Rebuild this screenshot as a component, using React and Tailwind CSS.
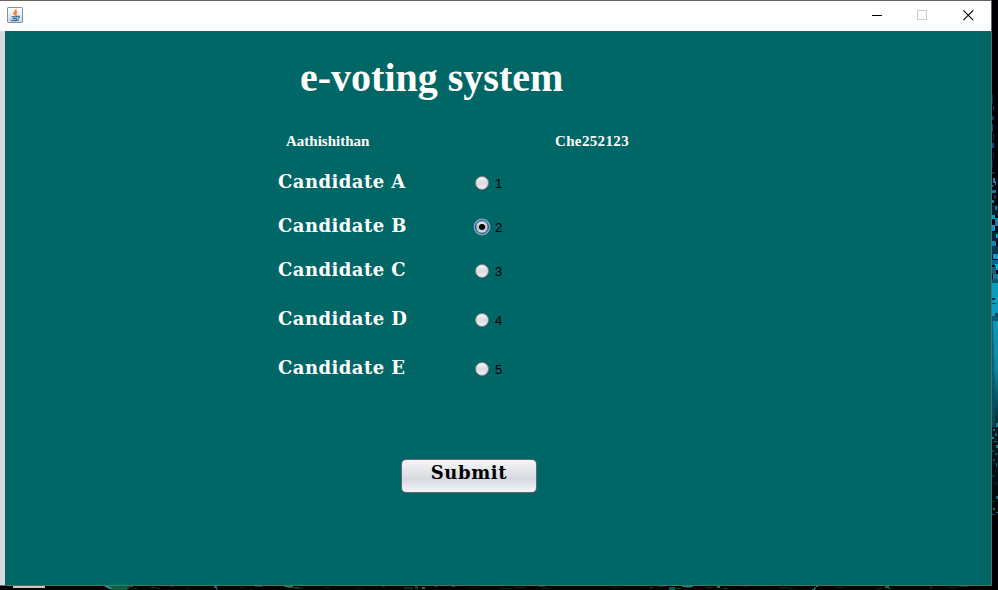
const candidates = [
  { name: 'Candidate A', value: '1', height: 'h-11' },
  { name: 'Candidate B', value: '2', height: 'h-11', selected: true },
  { name: 'Candidate C', value: '3', height: 'h-[49px]' },
  { name: 'Candidate D', value: '4', height: 'h-[49px]' },
  { name: 'Candidate E', value: '5', height: 'h-[49px]' },
];

// [x, y, width, height, colour] marks of the wallpaper right of the window
const sideMarks = [
  [0, 94, 1, 10, '#0a2a55'], [1, 106, 1, 5, '#0b3c70'], [0, 116, 2, 4, '#0b3c70'], [0, 124, 1, 8, '#0c4c86'],
  [1, 134, 1, 6, '#0a2a55'], [0, 143, 2, 5, '#0c4c86'], [1, 152, 1, 6, '#0a2a55'], [0, 160, 1, 8, '#082040'],
  [0, 172, 3, 2, '#063045'], [1, 178, 2, 5, '#0a86b8'], [0, 185, 2, 2, '#0a5c90'], [3, 181, 1, 4, '#0a86b8'],
  [0, 190, 4, 3, '#0a78a4'], [2, 195, 2, 4, '#063c5a'], [0, 200, 2, 3, '#0a86b8'], [0, 205, 6, 10, '#062030'],
  [3, 206, 2, 4, '#0a78a4'], [0, 215, 3, 4, '#0c9cc8'], [3, 218, 3, 8, '#0a86b0'], [0, 225, 3, 6, '#0c9cc8'],
  [0, 232, 6, 9, '#052535'], [4, 234, 2, 4, '#0c9cc8'], [0, 241, 4, 5, '#0a86b0'], [0, 246, 6, 9, '#063850'],
  [1, 254, 5, 5, '#0c9cc8'], [0, 260, 6, 5, '#0a6484'], [3, 264, 3, 6, '#0caad0'], [0, 267, 4, 7, '#08607c'],
  [1, 274, 5, 5, '#0a80a0'], [0, 279, 6, 5, '#075a74'], [0, 283, 6, 17, '#0c9cc0'], [0, 298, 3, 2, '#053040'],
  [0, 300, 6, 16, '#0c9cc0'], [0, 303, 4, 1, '#084858'], [3, 313, 3, 4, '#084858'], [0, 316, 6, 5, '#0a5c70'],
];

const lowerMarks = [
  [4, 423, 2, 4, '#0a8c98'], [1, 429, 2, 2, '#087880'], [3, 433, 2, 3, '#066068'], [0, 437, 2, 2, '#0a8c90'],
  [2, 441, 3, 1, '#087078'], [4, 445, 2, 3, '#087880'], [0, 450, 2, 2, '#054850'], [3, 453, 2, 2, '#066068'],
  [1, 459, 2, 2, '#054850'], [4, 463, 1, 4, '#066068'], [0, 475, 2, 2, '#043840'], [3, 483, 2, 1, '#043840'],
  [4, 496, 2, 3, '#077078'], [0, 501, 3, 1, '#043840'], [1, 508, 2, 2, '#088078'], [4, 512, 2, 1, '#077078'],
  [0, 514, 3, 1, '#055058'],
];

const bottomMarks = [
  [130, 0, 3, 1, '#106050'], [134, 2, 3, 1, '#0a4038'], [150, 1, 6, 1, '#0a3a38'], [156, 2, 4, 1, '#082c28'],
  [170, 0, 5, 1, '#082c28'], [185, 2, 6, 1, '#051c18'], [214, 0, 3, 2, '#107870'], [216, 2, 2, 2, '#0a5048'],
  [240, 1, 5, 1, '#062820'], [255, 0, 8, 1, '#0a4838'], [284, 0, 9, 1, '#108060'], [287, 1, 12, 1, '#0a5040'],
  [295, 2, 8, 1, '#083828'], [325, 1, 5, 1, '#062820'], [355, 2, 7, 1, '#051c18'], [382, 0, 3, 1, '#083828'],
  [404, 1, 9, 2, '#073020'], [415, 0, 3, 3, '#0a4a34'], [422, 1, 3, 2, '#107860'], [434, 0, 4, 1, '#083828'],
  [452, 0, 3, 1, '#0d6048'], [470, 1, 9, 1, '#051c18'], [500, 2, 12, 1, '#062620'], [515, 1, 10, 1, '#082c28'],
  [539, 0, 6, 1, '#083c38'], [541, 2, 8, 1, '#062620'], [610, 1, 10, 1, '#051c18'], [650, 1, 3, 1, '#0a5048'],
  [658, 0, 7, 1, '#073028'], [669, 1, 6, 3, '#0c5850'], [676, 2, 5, 1, '#084438'], [682, 0, 11, 1, '#128078'],
  [686, 1, 5, 1, '#0a5048'], [706, 1, 7, 1, '#083828'], [717, 0, 3, 2, '#107860'], [724, 2, 3, 1, '#0a5048'],
  [742, 0, 8, 1, '#051c18'], [779, 1, 9, 1, '#073028'], [787, 2, 6, 1, '#062620'], [812, 3, 3, 1, '#128078'],
  [814, 1, 2, 2, '#0c6860'], [816, 0, 2, 1, '#128078'], [835, 1, 9, 1, '#062620'], [876, 2, 6, 1, '#073028'],
  [885, 0, 4, 2, '#107060'], [888, 2, 3, 1, '#0a5048'], [930, 0, 2, 3, '#073028'], [948, 1, 9, 1, '#062620'],
  [959, 0, 9, 1, '#083828'],
];

function Marks({ marks }) {
  return marks.map(([x, y, width, height, fill]) => (
    <rect key={`${x}-${y}`} x={x} y={y} width={width} height={height} fill={fill} />
  ));
}

function SideWallpaper() {
  return (
    <svg width="6" height="586" className="block shrink-0">
      <defs>
        <linearGradient id="glow" x1="0" y1="0" x2="0" y2="1">
          <stop offset="0" stopColor="#0c98bc" />
          <stop offset=".45" stopColor="#0a88a8" />
          <stop offset="1" stopColor="#04252b" />
        </linearGradient>
        <linearGradient id="shade" x1="0" y1="0" x2="0" y2="1">
          <stop offset="0" stopColor="#031a1e" />
          <stop offset="1" stopColor="#000405" />
        </linearGradient>
      </defs>
      <rect width="6" height="586" fill="#000002" />
      <rect y="321" width="6" height="106" fill="url(#glow)" />
      <path d="M0 321h1l2 72v34H0z" fill="#07515f" opacity=".7" />
      <rect y="427" width="6" height="88" fill="url(#shade)" />
      <Marks marks={sideMarks} />
      <Marks marks={lowerMarks} />
    </svg>
  );
}

function BottomWallpaper() {
  return (
    <svg width="998" height="4" className="block">
      <rect width="998" height="4" fill="#000202" />
      <rect x="13" width="32" height="2" fill="#c8c8c8" />
      <path d="M104 0h24l2 1-3 3h-16z" fill="#0c6040" />
      <path d="M104 0h5l3 3h-2z" fill="#109890" />
      <Marks marks={bottomMarks} />
    </svg>
  );
}

function JavaIcon() {
  return (
    <svg width="16" height="16" viewBox="0 0 16 16" fill="none">
      <defs>
        <linearGradient id="tile" x1="0" y1="0" x2="0" y2="1">
          <stop offset="0" stopColor="#fff" />
          <stop offset="1" stopColor="#c9d7e3" />
        </linearGradient>
      </defs>
      <rect x=".5" y=".5" width="15" height="15" rx=".7" fill="url(#tile)" stroke="#7893aa" />
      <path d="M8.8 2.2c.8 2-2.6 2.8-1.7 4.6.3.6.8 1 .9 1.7M10.5 4.6c-2 .8-2.3 1.7-1.5 2.6.4.5.2 1-.2 1.4" stroke="#ed7d24" strokeWidth="1.4" />
      <path d="M4.6 9.4c1.6.5 4.4.4 6.2 0M5.4 11.1c1.3.4 3.5.4 4.8 0M10.9 9.2c2.2-.5 2 1.4.1 2M4.2 12.6c-1.7 1.2 5.8 1.4 7.5.2" stroke="#35689a" strokeWidth="1.1" />
    </svg>
  );
}

function TitleBar() {
  return (
    <header className="flex h-[30px] items-start bg-white pl-[7px] pt-[6px]">
      <JavaIcon />
      <div className="ml-auto flex pr-[17px] pt-[3px]">
        <svg width="11" height="11" shapeRendering="crispEdges" className="mr-[34px]"><path d="M0 5.5h10" stroke="#000" /></svg>
        <svg width="11" height="11" shapeRendering="crispEdges" fill="none" className="mr-[35px]"><rect x=".5" y=".5" width="9" height="9" stroke="#ccc" /></svg>
        <svg width="11" height="11"><path d="M.3 .3l9.9 9.9M10.2 .3L.3 10.2" stroke="#000" strokeWidth="1.1" /></svg>
      </div>
    </header>
  );
}

function Radio({ selected }) {
  return (
    <svg width="18" height="18" viewBox="0 0 18 18">
      <defs>
        <linearGradient id="radio" x1="0" y1="0" x2="0" y2="1">
          <stop offset="0" stopColor="#fafafc" />
          <stop offset=".5" stopColor="#d9dbe2" />
          <stop offset="1" stopColor="#f2f3f8" />
        </linearGradient>
        <linearGradient id="picked" x1="0" y1="0" x2="0" y2="1">
          <stop offset="0" stopColor="#f5f8fc" />
          <stop offset=".5" stopColor="#a9b9cb" />
          <stop offset="1" stopColor="#d7e4f2" />
        </linearGradient>
      </defs>
      {selected ? (
        <>
          <circle cx="9" cy="9" r="8.4" fill="#73a4d1" />
          <circle cx="9" cy="9" r="6.3" fill="url(#picked)" stroke="#26394f" />
          <circle cx="9" cy="9" r="3" fill="#000" />
        </>
      ) : (
        <>
          <circle cx="9" cy="9.6" r="7" fill="#34494c" opacity=".55" />
          <circle cx="9" cy="9" r="6.5" fill="url(#radio)" stroke="#7b7f84" />
        </>
      )}
    </svg>
  );
}

function CandidateRow({ name, value, height, selected }) {
  return (
    <div className={`flex items-start ${height}`}>
      <span className="w-[195px] whitespace-nowrap font-['DejaVu_Serif',serif] text-[18px] font-bold leading-6 tracking-[0.45px] text-white">
        {name}
      </span>
      <label className="flex items-start gap-1 pt-1">
        <Radio selected={selected} />
        <span className="pt-px font-['Liberation_Sans',sans-serif] text-[13px] leading-[18px] text-black">{value}</span>
      </label>
    </div>
  );
}

export default function App() {
  return (
    <div className="h-[590px] w-[998px] overflow-hidden bg-black">
      <div className="flex">
        <div className="flex h-[586px] w-[992px] flex-col border-b border-r border-t border-[#656565]">
          <TitleBar />
          <main className="flex-1 border-l-[5px] border-[#d6d9df] bg-[#006666]">
            <h1 className="ml-[295px] mt-[24px] whitespace-nowrap font-['Liberation_Serif',serif] text-[40px] font-bold leading-[46px] text-white">
              e-voting system
            </h1>
            <div className="ml-[281px] mt-[31px] flex whitespace-nowrap font-['Liberation_Serif',serif] text-[15px] font-bold leading-[18px] text-white">
              <span className="w-[269px]">Aathishithan</span>
              <span className="tracking-[0.35px]">Che252123</span>
            </div>
            <section className="ml-[273px] mt-5">
              {candidates.map((candidate) => (
                <CandidateRow key={candidate.value} {...candidate} />
              ))}
            </section>
            <button className="ml-[396px] mt-[54px] flex h-[34px] w-[136px] items-start justify-center rounded-[5px] border border-[#5d6870] bg-linear-to-b from-[#f6f6f9] via-[#d6d9df] via-60% to-[#f5f6fc] font-['DejaVu_Serif',serif] text-[18px] font-bold leading-[26px] tracking-[0.6px] text-black">
              Submit
            </button>
          </main>
        </div>
        <SideWallpaper />
      </div>
      <BottomWallpaper />
    </div>
  );
}
